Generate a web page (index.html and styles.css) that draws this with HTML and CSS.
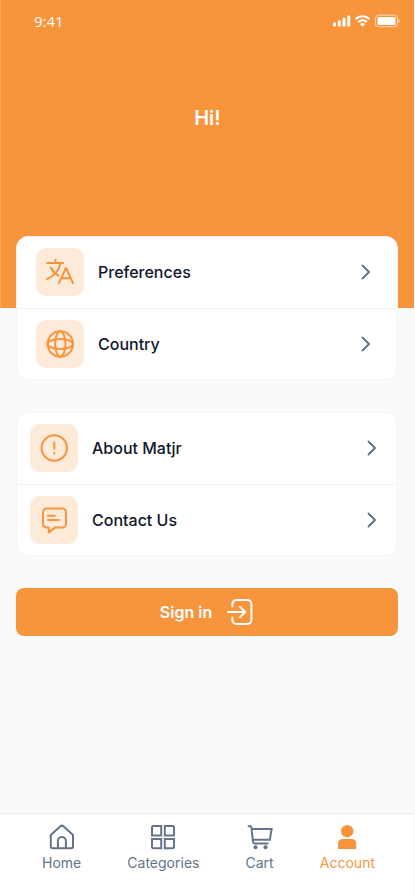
FILE: index.html
```html
<!DOCTYPE html>
<html lang="en">
<head>
<meta charset="utf-8">
<meta name="viewport" content="width=device-width, initial-scale=1">
<title>Account</title>
<link rel="stylesheet" href="styles.css">
</head>
<body>
<div class="screen">
  <header class="hero">
    <div class="status">
      <span class="time">9:41</span>
      <svg class="status-icons" width="68" height="14" viewBox="0 0 68 14" aria-hidden="true">
        <g fill="#fff">
          <rect x="1" y="8.500" width="3" height="4" rx="1"/>
          <rect x="5.800" y="6.500" width="3" height="6" rx="1"/>
          <rect x="10.500" y="4" width="3" height="8.500" rx="1"/>
          <rect x="15.200" y="1.500" width="3" height="11" rx="1"/>
          <path d="m30.500 12.700 2.600-2.600a3.800 3.800 0 0 0-5.200 0Z"/>
          <rect x="45.500" y="3" width="18" height="8" rx="1.500"/>
          <path d="M66.400 5v4c.9-.3 1.400-1.100 1.400-2s-.5-1.700-1.400-2Z" opacity=".6"/>
        </g>
        <g fill="none" stroke="#fff" stroke-width="2">
          <path d="M23.600 5.200a9.800 9.800 0 0 1 13.800 0M26 8.100a6.400 6.400 0 0 1 9 0"/>
          <rect x="43.500" y="1.200" width="22" height="11.600" rx="3.200" stroke-width="1" opacity=".65"/>
        </g>
      </svg>
    </div>
    <h1 class="greeting">Hi!</h1>
  </header>
  <main class="content">
    <nav class="card card-inset" aria-label="Settings">
      <a class="row" href="#preferences">
        <span class="tile"><svg width="32" height="32" viewBox="0 0 32 32" aria-hidden="true"><path d="M3.200 7h16M11.500 3.800V7M16.500 7C15.500 14 10 20.500 3.200 23M6.800 11.500c1.700 3.600 4.500 6.300 7.700 8.100M15 27.200l7-15.400 7 15.400M17.300 22.300h9.400"/></svg></span>
        <span class="label">Preferences</span>
        <svg class="chevron" width="24" height="24" viewBox="0 0 24 24" aria-hidden="true"><path d="m8.500 5.500 6.500 6.500-6.500 6.500"/></svg>
      </a>
      <a class="row" href="#country">
        <span class="tile"><svg width="32" height="32" viewBox="0 0 32 32" aria-hidden="true"><circle cx="16.300" cy="16" r="12.700"/><ellipse cx="16.300" cy="16" rx="5.200" ry="12.700"/><ellipse cx="16.300" cy="16" rx="12.700" ry="4.900"/></svg></span>
        <span class="label">Country</span>
        <svg class="chevron" width="24" height="24" viewBox="0 0 24 24" aria-hidden="true"><path d="m8.500 5.500 6.500 6.500-6.500 6.500"/></svg>
      </a>
    </nav>
    <nav class="card" aria-label="Information">
      <a class="row" href="#about">
        <span class="tile"><svg width="32" height="32" viewBox="0 0 32 32" aria-hidden="true"><circle cx="16.300" cy="16" r="12.700"/><path d="M16.300 10.500v6.200M16.300 20.800v.4"/></svg></span>
        <span class="label">About Matjr</span>
        <svg class="chevron" width="24" height="24" viewBox="0 0 24 24" aria-hidden="true"><path d="m8.500 5.500 6.500 6.500-6.500 6.500"/></svg>
      </a>
      <a class="row" href="#contact">
        <span class="tile"><svg width="32" height="32" viewBox="0 0 32 32" aria-hidden="true"><path d="M8.700 4.400h15.600a3.700 3.700 0 0 1 3.700 3.700v11.800a3.700 3.700 0 0 1-3.700 3.700H17l-6.300 4.800v-4.800h-2A3.700 3.700 0 0 1 5 19.900V8.100a3.700 3.700 0 0 1 3.700-3.700ZM10 11.700h6.700M10 16h10.800"/></svg></span>
        <span class="label">Contact Us</span>
        <svg class="chevron" width="24" height="24" viewBox="0 0 24 24" aria-hidden="true"><path d="m8.500 5.500 6.500 6.500-6.500 6.500"/></svg>
      </a>
    </nav>
    <button class="sign-in" type="button">
      <span>Sign in</span>
      <svg width="28" height="28" viewBox="0 0 28 28" aria-hidden="true"><path d="M6.400 8.500V6a4 4 0 0 1 4-4h11a4 4 0 0 1 4 4v16a4 4 0 0 1-4 4h-11a4 4 0 0 1-4-4v-2.500M2 14h16.500M14 8.800l5.200 5.200-5.200 5.200"/></svg>
    </button>
  </main>
  <nav class="tabs" aria-label="Main">
    <a class="tab" href="#home">
      <svg width="26" height="26" viewBox="0 0 26 26" aria-hidden="true"><path d="M1.800 11 11.400 2.300a2.200 2.200 0 0 1 3 0L24 11v11.500a1.800 1.800 0 0 1-1.800 1.800H3.600a1.800 1.800 0 0 1-1.800-1.800ZM8.900 24v-7a4 4 0 0 1 8 0v7"/></svg>
      <span>Home</span>
    </a>
    <a class="tab" href="#categories">
      <svg width="26" height="26" viewBox="0 0 26 26" aria-hidden="true"><path d="M3.200 2h8v9.500H2V3.200A1.200 1.200 0 0 1 3.200 2ZM14.800 2h8A1.200 1.200 0 0 1 24 3.200v8.300h-9.200ZM2 15h9.200v9.200h-8A1.200 1.200 0 0 1 2 23ZM14.800 15H24v8a1.200 1.200 0 0 1-1.200 1.200h-8Z"/></svg>
      <span>Categories</span>
    </a>
    <a class="tab" href="#cart">
      <svg width="26" height="26" viewBox="0 0 26 26" aria-hidden="true"><path d="M.8 2.200h2.600a1 1 0 0 1 1 .9L6 17.800a2 2 0 0 0 2 1.700h13.500M4.700 4.900h19.900l-1.700 10.900H5.800"/><g class="solid"><circle cx="8.500" cy="23.200" r="2"/><circle cx="18.500" cy="23.200" r="2"/></g></svg>
      <span>Cart</span>
    </a>
    <a class="tab tab-active" href="#account" aria-current="page">
      <svg width="26" height="26" viewBox="0 0 26 26" aria-hidden="true"><g class="solid"><circle cx="13.200" cy="7.200" r="6.200"/><path d="M4 25v-5.500A4.500 4.500 0 0 1 8.500 15h9.200a4.500 4.500 0 0 1 4.500 4.500V25Z"/></g></svg>
      <span>Account</span>
    </a>
  </nav>
</div>
</body>
</html>
```
FILE: styles.css
```css
* {
  box-sizing: border-box;
}

body {
  margin: 0;
  background: #f9fafc;
  color: #0f172a;
  font-family: Inter, "Liberation Sans", sans-serif;
}

a {
  color: inherit;
  text-decoration: none;
}

svg {
  display: block;
  flex: none;
}

.screen {
  display: flex;
  flex-direction: column;
  min-height: 100vh;
  padding-right: 1px;
}

.hero {
  height: 308px;
  border-left: 1px solid #f9a55c;
  background: #f8943c;
  color: #fff;
}

.status {
  display: flex;
  align-items: center;
  justify-content: space-between;
  padding: 11px 14px 0 33px;
}

.time {
  font-family: "Open Sans", "Noto Sans", sans-serif;
  font-size: 15px;
  line-height: 20px;
}

.greeting {
  margin: 75px 0 0;
  font-size: 20px;
  font-weight: 600;
  line-height: 24px;
  text-align: center;
}

.content {
  display: flex;
  flex: 1;
  flex-direction: column;
  gap: 32px;
  margin-top: -72px;
  padding: 0 16px 32px;
}

.card {
  border: 1px solid #f1f3f7;
  border-radius: 12px;
  background: #fff;
}

.row {
  display: flex;
  align-items: center;
  gap: 14px;
  padding: 11px 13px 12px;
}

.row + .row {
  padding-bottom: 11px;
  border-top: 1px solid #f1f3f7;
}

.card-inset .row {
  padding-right: 19px;
  padding-left: 19px;
}

.tile {
  display: flex;
  align-items: center;
  justify-content: center;
  width: 48px;
  height: 48px;
  border-radius: 10px;
  background: #feead8;
}

.tile svg {
  fill: none;
  stroke: #f8943c;
  stroke-width: 2;
  stroke-linecap: round;
  stroke-linejoin: round;
}

.label {
  flex: 1;
  font-size: 16px;
  font-weight: 500;
  line-height: 24px;
}

.chevron {
  fill: none;
  stroke: #64748b;
  stroke-width: 2;
  stroke-linecap: round;
  stroke-linejoin: round;
}

.sign-in {
  display: flex;
  align-items: center;
  justify-content: center;
  gap: 14px;
  height: 48px;
  padding: 0;
  border: 0;
  border-radius: 8px;
  background: #f8943c;
  color: #fff;
  font: 600 16px/24px Inter, "Liberation Sans", sans-serif;
}

.sign-in svg {
  fill: none;
  stroke: currentColor;
  stroke-width: 2;
  stroke-linecap: round;
  stroke-linejoin: round;
}

.tabs {
  display: flex;
  justify-content: space-between;
  padding: 10px 39px 23px 42px;
  border-top: 1px solid #e6eaee;
  background: #fff;
  color: #64748b;
}

.tab {
  display: flex;
  flex-direction: column;
  align-items: center;
  gap: 3px;
  font-size: 14px;
  line-height: 20px;
}

.tab svg {
  fill: none;
  stroke: currentColor;
  stroke-width: 2;
}

.tab .solid {
  fill: currentColor;
  stroke: none;
}

.tab-active {
  color: #f8943c;
}
```
